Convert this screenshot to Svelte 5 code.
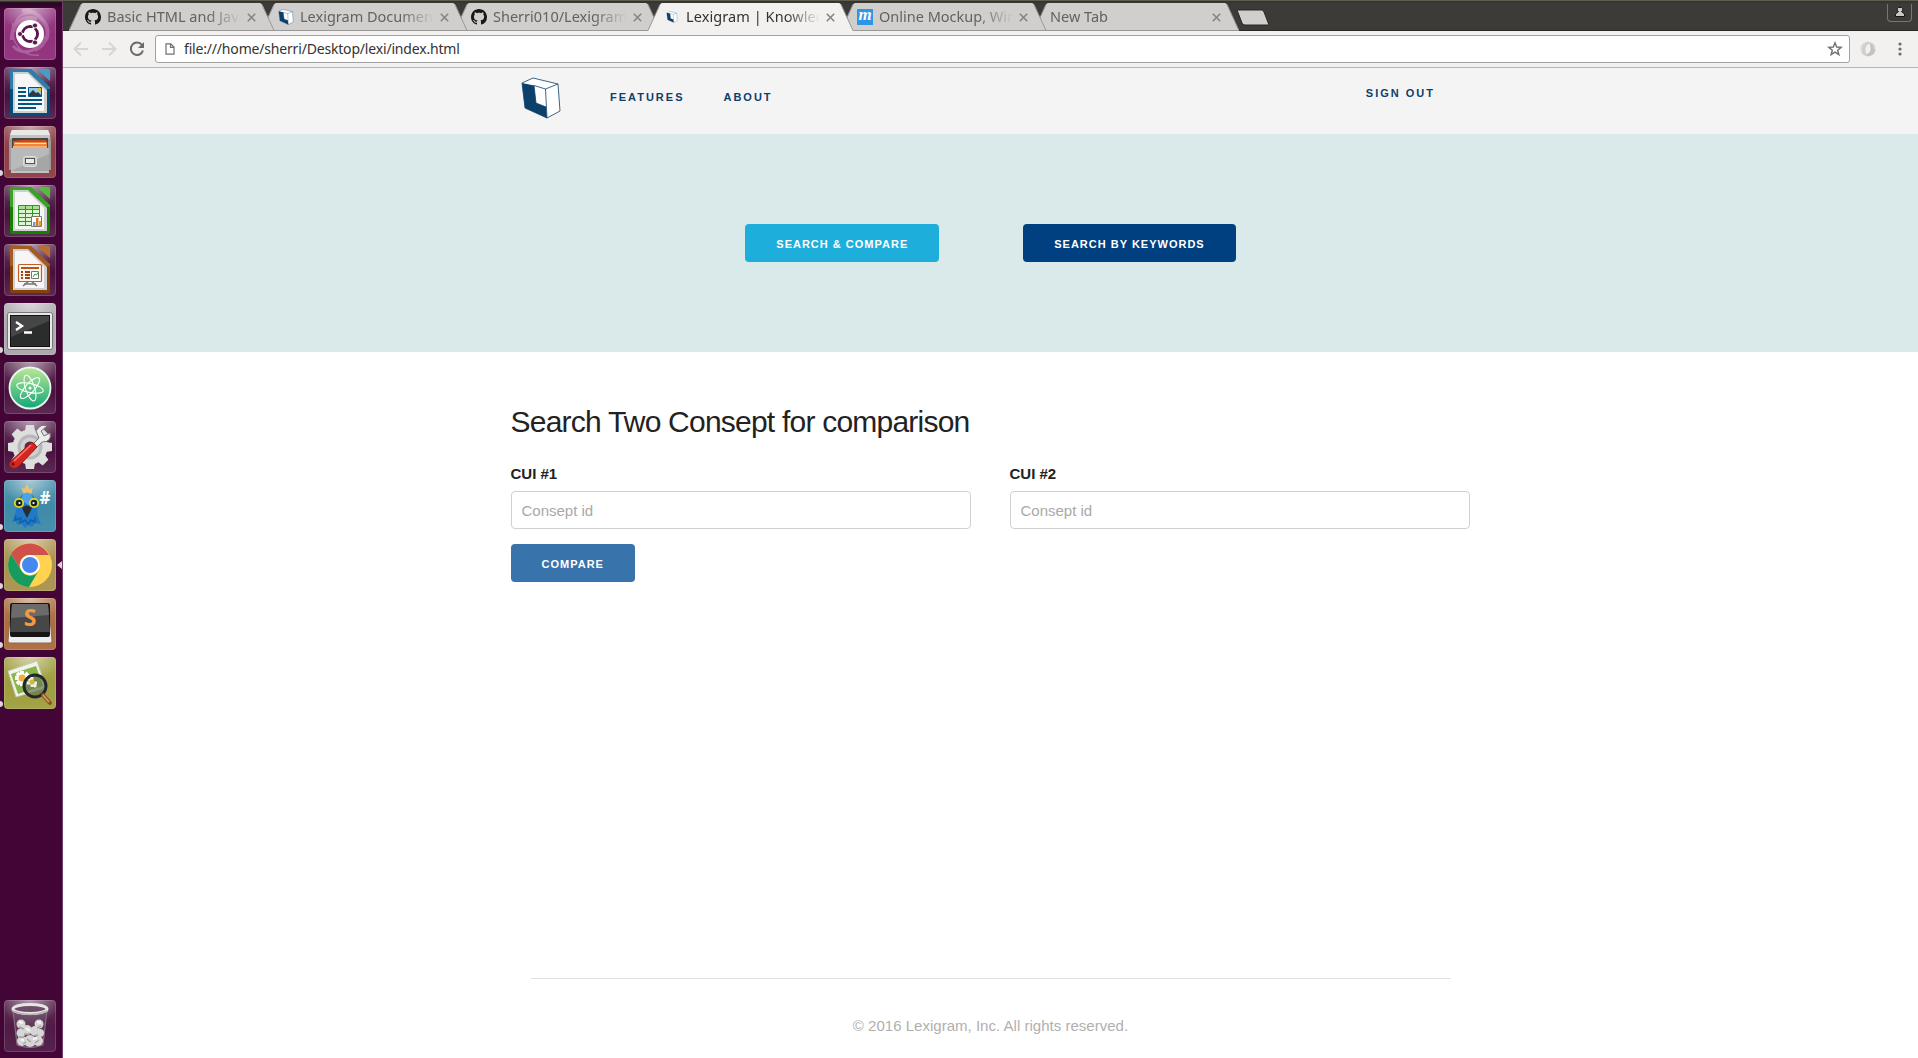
<script>
  const launchers = [
    { id: 'dash', tint: '#8d2a78' },
    { id: 'writer', tint: '#4a1440' },
    { id: 'files', tint: '#8a3840', running: true },
    { id: 'calc', tint: '#4a1440' },
    { id: 'impress', tint: '#4a1440' },
    { id: 'terminal', tint: '#aaa3ab', running: true },
    { id: 'atom', tint: '#4a1440' },
    { id: 'settings', tint: '#4a1440' },
    { id: 'bird', tint: '#3988a5', running: true },
    { id: 'chrome', tint: '#a8904a', running: true, focused: true },
    { id: 'sublime', tint: '#a9693a', running: true },
    { id: 'viewer', tint: '#9c9c3a', running: true }
  ];
  const tabs = [
    { icon: 'github', title: 'Basic HTML and Java' },
    { icon: 'lexi', title: 'Lexigram Document' },
    { icon: 'github', title: 'Sherri010/Lexigram' },
    { icon: 'lexismall', title: 'Lexigram | Knowledge', active: true },
    { icon: 'moq', title: 'Online Mockup, Wire' },
    { icon: '', title: 'New Tab' }
  ];
  const teeth = [0, 45, 90, 135, 180, 225, 270, 315];
</script>

{#snippet cube()}
  <path d="M1 6 L12 1 L37 7 L39 34 L26 41 L4 31 Z" fill="#fff" />
  <path d="M1 6 L13 8.500 L15 26 L25 30 L26 41 L4 31 Z" fill="#0d3f6b" />
  <path d="M1 6 L12 1 L37 7 L24.500 12 L13 8.500 M24.500 12 L26 41 L39 34 L37 7 M1 6 L4 31 L26 41 M13 8.500 L15 26 L25 30" fill="none" stroke="#0d3f6b" stroke-width=".8" stroke-linejoin="round" />
{/snippet}

{#snippet sheet(dark, light)}
  <path d="M8 2 H27 L46 20 V47 a2 2 0 0 1-2 2 H8 a2 2 0 0 1-2-2 V4 a2 2 0 0 1 2-2Z" fill={dark} />
  <path d="M6 22 V4 a2 2 0 0 1 2-2 H27 L46 20 V22Z" fill={light} opacity=".6" />
  <path d="M9 5 H24 L43 23 V46 H9Z" fill="#cfcfcf" />
  <path d="M11 7 H24 L40 23 V44 H11Z" fill="#f6f6f6" />
  <path d="M33 2 H44 a2 2 0 0 1 2 2 V14Z" fill={light} />
{/snippet}

{#snippet appIcon(id)}
  <svg viewBox="0 0 52 52" width="52" height="52">
    {#if id === 'dash'}
      <g fill="none" stroke="#fff" opacity=".22" stroke-width="1.500">
        <path d="M11 24 C7 5 29 -1 41 13 C48 22 44 38 31 43" />
        <path d="M8 32 C7 12 21 8 33 11" stroke-width="4" />
        <path d="M18 3 C34 1 48 18 42 32" stroke-width="4" />
        <path d="M42 28 C36 43 19 49 9 38" stroke-width="3" />
        <path d="M9 15 C5 35 19 49 35 47" />
      </g>
      <circle cx="26" cy="26" r="14" fill="#fff" />
      <circle cx="26" cy="26" r="7.500" fill="none" stroke="#5e1650" stroke-width="3" />
      <path d="M26 26 L14 26 M26 26 L32 16 M26 26 L32 36" stroke="#fff" stroke-width="2" />
      <circle cx="26" cy="26" r="6" fill="#fff" />
      <g fill="#5e1650" stroke="#fff" stroke-width=".8"><circle cx="16" cy="26" r="2.500" /><circle cx="31" cy="17.500" r="2.500" /><circle cx="31" cy="34.500" r="2.500" /></g>
    {:else if id === 'writer'}
      {@render sheet('#00507f', '#4a9cc8')}
      <path d="M14 21 h8 M14 25 h8 M14 29 h8 M14 33 h24 M14 37 h24 M14 41 h18" stroke="#005584" stroke-width="2" />
      <path d="M24.500 20.500 H37.500 V29.500 H24.500Z" fill="#8ccdf2" stroke="#005584" />
      <circle cx="35.500" cy="22.500" r="1.800" fill="#e0bd38" />
      <path d="M25 29 V27 L29 23 L32 26 L34 25 L37 28 V29Z" fill="#35383b" />
    {:else if id === 'files'}
      <path d="M7 4 H45 L47 15 V44 H5 V15Z" fill="#9c9c9a" />
      <path d="M8 4 H44 L46 9 H6Z" fill="#e8e8e7" /><path d="M6 9 H46 V13 H6Z" fill="#c2c2c1" />
      <path d="M8 12 H44 V23 H8Z" fill="#494743" />
      <path d="M9 15 L18 14 H42 V23 H9Z" fill="#c34b20" /><path d="M10 16 H43 V23 H10Z" fill="#ef863f" /><path d="M11 17.500 H42" stroke="#ffe0a0" /><path d="M9 20 H43 V23 H9Z" fill="#f8ad68" />
      <path d="M7 22 H45 V47 H7Z" fill="#a6a6a6" /><path d="M7 22 H45 V28 L7 45Z" fill="#c6c6c6" opacity=".6" /><path d="M7 46 H45" stroke="#ddd" />
      <rect x="19.500" y="30.500" width="13" height="10" rx="2" fill="#c8c8c8" stroke="#ddd" /><rect x="21.500" y="32.500" width="9" height="5" fill="#ececec" stroke="#555" />
    {:else if id === 'calc'}
      {@render sheet('#168000', '#52bd3c')}
      <path d="M14.500 20.500 H35.500 V40.500 H14.500Z" fill="#dcf7cf" />
      <path d="M14.500 20.500 H35.500 V24.500 H14.500Z" fill="#a8e08e" />
      <path d="M14.500 20.500 H35.500 V40.500 H14.500Z M21.500 20 V40 M28.500 20 V40 M14 24.500 H36 M14 28.500 H36 M14 32.500 H36 M14 36.500 H36" fill="none" stroke="#2c962c" />
      <path d="M27.500 31.500 H37.500 V41.500 H27.500Z" fill="#fff" stroke="#777" /><path d="M29 37 h2.500 v4 h-2.500Z" fill="#57a6d6" /><path d="M32 33 h2.500 v8 h-2.500Z" fill="#e4741c" /><path d="M35 36 h2 v5 h-2Z" fill="#e4a418" />
    {:else if id === 'impress'}
      {@render sheet('#87420c', '#b96e36')}
      <path d="M26 36 L19 42 M26 36 L33 42 M20 40 H32" stroke="#77777a" stroke-width="1.600" fill="none" />
      <rect x="14.500" y="20.500" width="23" height="17" rx="1" fill="#fff7ed" stroke="#c55d26" stroke-width="1.200" />
      <path d="M17 24 H35" stroke="#b55526" stroke-width="2" /><path d="M17 28 h2 m2 0 h5 M17 31 h2 m2 0 h5 M17 34 h2 m2 0 h5" stroke="#9e4117" stroke-width="1.800" />
      <path d="M27.500 27.500 h7 v7 h-7Z" fill="#fff" stroke="#777" /><path d="M29 33 l2-3 1.500 1 1.500-2.500" stroke="#32a040" fill="none" />
    {:else if id === 'terminal'}
      <rect x="3.500" y="9.500" width="45" height="37" rx="2" fill="#e8e8e7" stroke="#777" />
      <rect x="6.500" y="12.500" width="39" height="31" fill="#2b2c2c" stroke="#111" />
      <path d="M7 13 H45 V18 L7 34Z" fill="#555" opacity=".65" />
      <path d="M12 19 L18 23 L12 27 M20 29.500 H28" fill="none" stroke="#fff" stroke-width="2.300" />
    {:else if id === 'atom'}
      <defs><linearGradient id="atomGreen" x2="0" y2="1"><stop stop-color="#bce894" /><stop offset="1" stop-color="#10a779" /></linearGradient></defs>
      <circle cx="26" cy="26" r="20.500" fill="url(#atomGreen)" stroke="#e8f7ef" stroke-width="1.800" />
      <g fill="none" stroke="#fff" stroke-width="1.100"><ellipse cx="26" cy="26" rx="13.500" ry="4.500" transform="rotate(12 26 26)" /><ellipse cx="26" cy="26" rx="13.500" ry="4.500" transform="rotate(72 26 26)" /><ellipse cx="26" cy="26" rx="13.500" ry="4.500" transform="rotate(132 26 26)" /></g>
      <circle cx="26" cy="26" r="1.500" fill="#fff" />
    {:else if id === 'settings'}
      <g fill="#dedede">
        {#each teeth as angle}<path d="M21 10 L22 4 H30 L31 10Z" transform="rotate({angle} 26 26)" />{/each}
        <circle cx="26" cy="26" r="17.500" />
      </g>
      <circle cx="26" cy="26" r="11" fill="#d0d0d0" stroke="#b8b8b8" stroke-width="3" /><circle cx="26" cy="26" r="5.500" fill="#5a2950" />
      <path d="M30 22 L35 17 L32 10 Q37 2 43 5 L37 10 L40 15 L46 12 Q48 21 38 21 L33 26Z" fill="#ececec" stroke="#777" />
      <path d="M7 40 L28 21 L33 26 L14 46 Q9 49 6 45 Q4 43 7 40Z" fill="#d42720" stroke="#9a1b17" /><path d="M10 40 L27 24" stroke="#fa7770" stroke-width="1.500" /><circle cx="9" cy="43" r="1.500" fill="#5b1516" />
    {:else if id === 'bird'}
      <path d="M17 7 L20 9 L23 4 L26 9 L29 7 L27 15 H20Z" fill="#e8c070" />
      <path d="M19 14 Q14 18 13 26 L11 34 L8 42 L12 41 L13 45 L17 43 L21 48 L24 45 L28 47 L31 43 L37 44 L34 37 L33 26 Q32 17 27 14Z" fill="#2178c6" />
      <path d="M19 14 Q23 11 27 14 L30 20 L24 25 L17 20Z" fill="#4fa3e4" />
      <path d="M12 36 L11 40 L17 38 L16 43 L21 40 L24 44 L27 40 L31 42 L31 37" fill="none" stroke="#135fa5" stroke-width="1.500" />
      <circle cx="15" cy="23" r="4.200" fill="#172225" stroke="#e5da20" stroke-width="1.800" /><circle cx="30" cy="23" r="4.200" fill="#172225" stroke="#e5da20" stroke-width="1.800" /><circle cx="15.500" cy="23" r="1.100" fill="#fff" /><circle cx="29.500" cy="23" r="1.100" fill="#fff" />
      <path d="M18 28 Q23 23 28 28 L23 38Z" fill="#292b31" />
      <text x="35.500" y="23.500" class="hash">#</text>
    {:else if id === 'chrome'}
      <circle cx="26" cy="26" r="22" fill="#ffd350" />
      <path d="M7 15 A22 22 0 0 1 45 16 H26 A10 10 0 0 0 17 31Z" fill="#cf514a" />
      <path d="M7 15 A22 22 0 0 0 25 48 L35 31 A10 10 0 0 1 17 31Z" fill="#179c60" />
      <circle cx="26" cy="26" r="10" fill="#fff" /><circle cx="26" cy="26" r="8" fill="#4588ee" />
    {:else if id === 'sublime'}
      <path d="M7 8 H45 L48 43 Q48 45 46 45 H6 Q4 45 4 43Z" fill="#eee" stroke="#8e6950" />
      <path d="M8 5 H44 Q46 5 46 8 L46 37 Q46 39 44 39 H8 Q6 39 6 37 L6 8 Q6 5 8 5Z" fill="#151515" />
      <path d="M8 6 H44 L46 34 H6Z" fill="#474747" /><path d="M8 6 H44 L45 17 L7 20Z" fill="#6b6b6b" />
      <text x="26" y="28" text-anchor="middle" class="letter">S</text>
    {:else if id === 'viewer'}
      <path d="M4 14 L33 4 L42 31 L12 40Z" fill="#f2f3ec" stroke="#c7caae" />
      <path d="M7 17 L32 9 L39 29 L14 37Z" fill="#8ab54a" />
      <path d="M18 14 V29 M11 21 H27 M13 16 L24 27 M24 16 L13 27" stroke="#fff" stroke-width="4" /><circle cx="18" cy="21" r="3.500" fill="#e7b534" />
      <circle cx="31" cy="29" r="11" fill="#66764d" fill-opacity=".7" stroke="#24272a" stroke-width="3" />
      <path d="M28 20 V30 M23 26 H33 M25 22 L32 30" stroke="#eef0df" stroke-width="3" /><circle cx="28" cy="25" r="2.500" fill="#d9b43a" />
      <path d="M39 38 L46 46" stroke="#8b5329" stroke-width="4" stroke-linecap="round" /><path d="M39 38 L45 45" stroke="#dfa65f" stroke-width="1.500" />
    {:else if id === 'trash'}
      <path d="M9 10 L13 45 Q26 50 39 45 L43 10" fill="#70556b" fill-opacity=".5" stroke="#8c7488" />
      <g fill="#d6d6d4">
        <circle cx="17" cy="24" r="4.500" /><circle cx="35" cy="24" r="4.500" /><circle cx="23" cy="30" r="5" /><circle cx="31" cy="31" r="5" /><circle cx="17" cy="33" r="4.500" /><circle cx="36" cy="33" r="4" /><circle cx="18" cy="41" r="5" /><circle cx="26" cy="41" r="6" /><circle cx="34" cy="41" r="5" />
      </g>
      <path d="M15 27 L20 29 M33 28 L37 26 M20 34 L26 34 M29 36 L34 35 M15 37 L20 37 M23 39 L27 42 M31 43 L35 40 M19 44 L22 42" fill="none" stroke="#a3a3a1" stroke-width="1.400" />
      <path d="M15 22 L19 23 M33 22 L37 23 M22 28 L26 31 M17 40 L20 40 M29 39 L33 38" stroke="#f7f7f6" stroke-width="2" />
      <ellipse cx="26" cy="9" rx="17" ry="4.500" fill="#6d4c66" stroke="#e5e5e3" stroke-width="3" /><path d="M8.500 11 Q26 18 43.500 11" fill="none" stroke="#b4b1b0" stroke-width="1.500" />
    {/if}
  </svg>
{/snippet}

{#snippet favicon(icon)}
  {#if icon === 'github'}
    <svg class="fav" viewBox="0 0 16 16"><path fill="#181818" d="M8 0C3.580 0 0 3.580 0 8c0 3.540 2.290 6.530 5.470 7.590.4.070.55-.17.55-.38 0-.19-.01-.82-.01-1.490-2.010.37-2.530-.49-2.690-.94-.09-.23-.48-.94-.82-1.130-.28-.15-.68-.52-.01-.53.63-.01 1.080.58 1.230.82.72 1.210 1.870.87 2.330.66.07-.52.28-.87.51-1.070-1.780-.2-3.640-.89-3.640-3.950 0-.87.31-1.590.82-2.150-.08-.2-.36-1.020.08-2.120 0 0 .67-.21 2.200.82.640-.18 1.320-.27 2-.27s1.360.09 2 .27c1.530-1.040 2.200-.82 2.200-.82.440 1.100.160 1.920.08 2.120.51.56.82 1.270.82 2.150 0 3.070-1.870 3.750-3.650 3.950.29.25.54.73.54 1.480 0 1.070-.01 1.930-.01 2.200 0 .21.150.46.55.38A8 8 0 0 0 16 8c0-4.420-3.580-8-8-8Z" /></svg>
  {:else if icon === 'lexi'}
    <svg class="fav" viewBox="0 0 40 42">{@render cube()}</svg>
  {:else if icon === 'lexismall'}
    <svg class="fav" viewBox="-8 -8 56 58">{@render cube()}</svg>
  {:else if icon === 'moq'}
    <span class="fav moq">m</span>
  {/if}
{/snippet}

<div class="desktop">
  <aside class="dock">
    {#each launchers as app}
      <div class="tile {app.id}" style:background-color={app.tint}>
        {@render appIcon(app.id)}
        {#if app.running}<i class="pip"></i>{/if}
        {#if app.focused}<i class="arrow"></i>{/if}
      </div>
    {/each}
    <div class="tile trash">{@render appIcon('trash')}</div>
  </aside>

  <div class="browser">
    <div class="tabstrip">
      {#each tabs as tab, i}
        <div class="tab" class:active={tab.active} style:z-index={tab.active ? 20 : 10 - i}>
          <svg class="shape" viewBox="0 0 205 28" width="205" height="28">
            <path class="fill" d="M0 28 L12 1.500 Q13 0 14 0 H191 Q192 0 193 1.500 L205 28Z" />
            <path class="edge" d="M0 27.500 L12 1.500 M193 1.500 L205 27.500" />
            <path class="base" d="M1 27.500 H205" />
          </svg>
          <div class="tabbody">
            {@render favicon(tab.icon)}
            <span class="title">{tab.title}</span>
            <svg class="close" viewBox="0 0 9 9"><path d="M.8 .8 L8.200 8.200 M8.200 .8 L.8 8.200" /></svg>
          </div>
        </div>
      {/each}
      <svg class="newtab" width="34" height="18" viewBox="0 0 34 18"><path d="M1 1 H26 Q27 1 28 3 L33 16 H9 Q7 16 6 14Z" fill="#d0cfcd" stroke="#292824" /></svg>
      <div class="profile">
        <svg width="12" height="12" viewBox="0 0 12 12"><path d="M6 1.500 a2 2 0 0 1 1.500 4 L10.500 8 V10.500 H1.500 V8 L4.500 5.500 A2 2 0 0 1 6 1.500Z" fill="#c8c8c8" stroke="#161616" /></svg>
      </div>
    </div>

    <div class="toolbar">
      <svg class="nav" width="16" height="16" viewBox="0 0 16 16"><path d="M15 8 H2 M8 1.500 L1.500 8 L8 14.500" stroke="#d5d5d5" /></svg>
      <svg class="nav" width="16" height="16" viewBox="0 0 16 16"><path d="M1 8 H14 M8 1.500 L14.500 8 L8 14.500" stroke="#d5d5d5" /></svg>
      <svg class="nav" width="16" height="16" viewBox="0 0 16 16"><path d="M13 4 A6.200 6.200 0 1 0 14 9.500" stroke="#6b6b6b" /><path d="M15 1 V7 H9Z" fill="#6b6b6b" /></svg>
      <div class="omnibox">
        <svg width="10" height="12" viewBox="0 0 10 12"><path d="M1 .8 H5.800 L9 4 V11.200 H1Z M5.500 .8 V4.300 H9" fill="none" stroke="#707070" stroke-width="1.200" /></svg>
        <span class="url">file:///home/sherri/Desktop/lexi/index.html</span>
        <svg class="star" width="16" height="16" viewBox="0 0 16 16"><path d="M8 1.800 L9.700 6 L14.200 6.300 L10.700 9.200 L11.900 13.700 L8 11.200 L4.100 13.700 L5.300 9.200 L1.800 6.300 L6.300 6Z" fill="none" stroke="#707070" stroke-width="1.400" /></svg>
      </div>
      <svg class="ext" width="16" height="16" viewBox="0 0 16 16"><path d="M9 .5 Q1 1.500 .5 7 Q.5 13 5.500 15 Q7 14.500 6.500 13.500 Q4 8 7 4 Q8 3 10 3Z" fill="#cfcfcf" /><path d="M7 15.500 Q15 14.500 15.500 9 Q15.500 3 10.500 1 Q9 1.500 9.500 2.500 Q12 8 9 12 Q8 13 6 13Z" fill="#c2c2c2" /><path d="M10 1 Q15 4 15 9 M2 11 Q0 5 5 2" fill="none" stroke="#e2e2e2" /></svg>
      <svg class="dots" width="4" height="14" viewBox="0 0 4 14" fill="#6d6d6d"><circle cx="2" cy="2" r="1.600" /><circle cx="2" cy="7" r="1.600" /><circle cx="2" cy="12" r="1.600" /></svg>
    </div>

    <div class="page">
      <header>
        <div class="container navrow">
          <svg class="logo" width="40" height="42" viewBox="0 0 40 42">{@render cube()}</svg>
          <span class="link features">Features</span>
          <span class="link about">About</span>
          <span class="link signout">Sign out</span>
        </div>
      </header>
      <section class="hero">
        <button class="light">Search &amp; Compare</button>
        <button class="dark">Search by Keywords</button>
      </section>
      <main class="container">
        <h4>Search Two Consept for comparison</h4>
        <div class="fields">
          <label>CUI #1<input type="text" placeholder="Consept id" /></label>
          <label>CUI #2<input type="text" placeholder="Consept id" /></label>
        </div>
        <button class="compare">Compare</button>
      </main>
      <footer>© 2016 Lexigram, Inc. All rights reserved.</footer>
    </div>
  </div>
</div>

<style>
  :global(body) { margin: 0; overflow: hidden; }
  .desktop { display: flex; width: 100vw; height: 1058px; overflow: hidden; box-sizing: border-box; background: #fff; font-family: "Liberation Sans", Arial, sans-serif; }
  .desktop * { box-sizing: border-box; }
  svg { display: block; flex: none; }

  .dock { display: flex; flex-direction: column; gap: 7px; flex: none; width: 63px; padding: 8px 0 6px 4px; border-right: 1px solid #6f3d65; background: linear-gradient(#5f5f50 1px, #2b0a25 2px, #2d0525 5px, #430536 9px, #430536); }
  .tile { position: relative; width: 52px; height: 52px; border-radius: 4px; background-image: radial-gradient(ellipse 30px 24px at 50% 0, #ffffff80, #ffffff00), linear-gradient(#ffffff22, #ffffff08 50%, #ffffff10); box-shadow: inset 0 0 0 1px #ffffff28; }
  .writer, .calc, .impress, .atom, .settings { background-image: radial-gradient(ellipse 30px 24px at 50% 0, #ffffff80, #ffffff00), linear-gradient(#ffffff2a, #4305363a 55%, #ffffff18); }
  .trash { margin-top: auto; background-color: #4a1440; }
  .pip { position: absolute; left: -7px; top: 44px; width: 6px; height: 6px; border-radius: 50%; background: #d9d5d8; }
  .arrow { position: absolute; left: 53px; top: 22px; border: 4px solid transparent; border-left: 0; border-right: 5px solid #d9d5d8; }
  .hash { font: bold 17px "Open Sans", sans-serif; fill: #fff; }
  .letter { font: bold 23px "Open Sans", sans-serif; fill: #f39a3e; }

  .browser { display: flex; flex-direction: column; flex: 1; min-width: 0; }
  .tabstrip { display: flex; height: 31px; padding: 3px 6px 0 6px; background: linear-gradient(#5f5f50 1px, #33322d 1px, #3c3b37 4px, #3c3b37 30px, #292824 30px); }
  .tab { display: grid; grid-template-columns: 205px; width: 205px; height: 28px; margin-right: -12px; position: relative; flex: none; }
  .shape, .tabbody { grid-area: 1 / 1; min-width: 0; }
  .fill { fill: #d0cfcd; }
  .edge, .base { fill: none; stroke: #999896; }
  .active .fill { fill: #f2f1f0; }
  .active .base { display: none; }
  .tabbody { display: flex; align-items: center; padding: 0 18px 0 16px; z-index: 1; }
  .fav { width: 16px; height: 16px; margin-right: 6px; flex: none; }
  .moq { background: #2f96e4; color: #fff; font: italic bold 17px/12px "Liberation Serif", serif; text-align: center; }
  .title { flex: 1; min-width: 0; overflow: hidden; white-space: nowrap; font: 14.500px/20px "Noto Sans", sans-serif; color: #626262; mask-image: linear-gradient(90deg, #000 calc(100% - 34px), transparent 100%); margin: 0 6px 2px 0; }
  .active .title { color: #333; letter-spacing: .08px; }
  .close { width: 9px; height: 9px; stroke: #858585; stroke-width: 1.600; }
  .newtab { margin: 6px 0 0 9px; }
  .profile { margin: 1px 0 0 auto; width: 25px; height: 18px; border: 1px solid #77766f; border-top: 0; border-radius: 0 0 4px 4px; padding: 2px 6px; }

  .toolbar { display: flex; align-items: center; height: 37px; padding: 0 16px 1px 10px; background: #f2f1f0; border-bottom: 1px solid #b6b5b4; }
  .nav { fill: none; stroke-width: 2; margin-right: 12px; }
  .omnibox { flex: 1; display: flex; align-items: center; height: 28px; margin: 0 10px 0 -2px; padding: 0 6px 0 9px; background: #fff; border: 1px solid #a2a2a1; border-radius: 3px; }
  .url { margin-left: 9px; font: 14px/20px "Noto Sans", sans-serif; color: #333; letter-spacing: -.18px; }
  .star { margin-left: auto; }
  .dots { margin-left: 22px; }

  .page { display: flex; flex-direction: column; flex: 1; }
  .container { width: 960px; margin: 0 auto; }
  header { height: 66px; background: #f4f4f4; }
  .navrow { display: flex; }
  .logo { margin: 9px 0 0 10px; }
  .link { font-size: 11px; font-weight: 700; line-height: 18px; letter-spacing: 2px; text-transform: uppercase; color: #0d3f6b; }
  .features { margin: 20px 0 0 49.500px; }
  .about { margin: 20px 0 0 39px; }
  .signout { margin: 16px 35.500px 0 auto; }
  .hero { display: flex; align-items: flex-start; justify-content: center; gap: 84px; height: 218px; padding-top: 90px; background: #dae9e9; }
  button { height: 38px; padding: 0 30px; border: 1px solid transparent; border-radius: 4px; font: 600 11px/38px "Liberation Sans", Arial, sans-serif; letter-spacing: 1px; text-transform: uppercase; white-space: nowrap; color: #fff; }
  .light { background: #1eaedb; }
  .dark { background: #004080; }
  .compare { background: #3973ac; }
  h4 { margin: 50px 0 21px; font-size: 30px; line-height: 39px; font-weight: 300; letter-spacing: -.78px; color: #222; }
  .fields { display: flex; gap: 39px; margin-bottom: 15px; }
  label { width: 460px; font-size: 15px; line-height: 24px; font-weight: 600; color: #222; }
  input { display: block; width: 100%; height: 38px; margin-top: 5px; padding: 6px 10px; border: 1px solid #d1d1d1; border-radius: 4px; font: 15px "Liberation Sans", Arial, sans-serif; background: #fff; }
  input::placeholder { color: #a9a9a9; }
  footer { width: 920px; height: 80px; margin: auto auto 0; padding-top: 35px; border-top: 1px solid #e1e1e1; text-align: center; font-size: 15px; line-height: 24px; letter-spacing: .02px; color: #b0b0b0; }
</style>
